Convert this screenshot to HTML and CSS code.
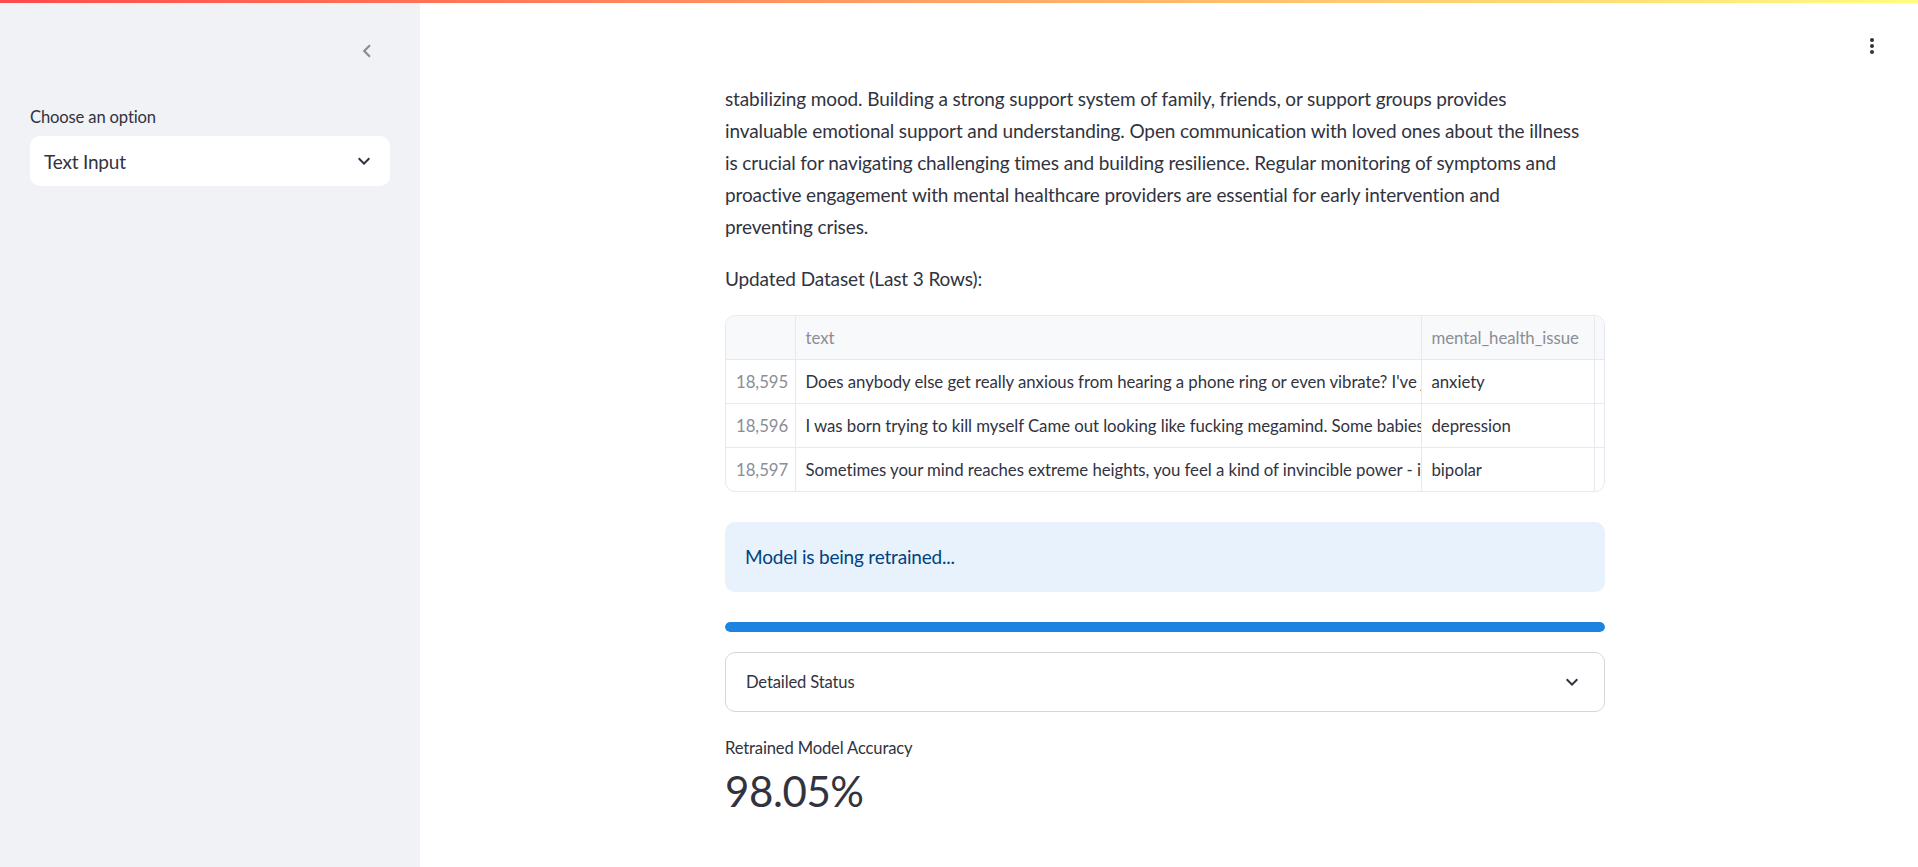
FILE: index.html
```html
<!DOCTYPE html>
<html lang="en">
<head>
<meta charset="utf-8">
<title>Mental Health App</title>
<link rel="stylesheet" href="styles.css">
</head>
<body>
<div class="decoration"></div>
<div class="app">
  <aside class="sidebar">
    <div class="sidebar-head">
      <button class="collapse-btn" aria-label="Collapse sidebar">
        <svg viewBox="0 0 24 24" width="26" height="26"><path d="M15.41 7.41L14 6l-6 6 6 6 1.41-1.41L10.83 12z" fill="currentColor"/></svg>
      </button>
    </div>
    <label class="widget-label">Choose an option</label>
    <div class="select">
      <span class="select-value">Text Input</span>
      <svg viewBox="0 0 24 24" width="24" height="24"><path d="M16.59 8.59L12 13.17 7.41 8.59 6 10l6 6 6-6z" fill="currentColor"/></svg>
    </div>
  </aside>

  <main class="main">
    <header class="topbar">
      <button class="menu-btn" aria-label="Main menu">
        <svg viewBox="0 0 24 24" width="24" height="24"><circle cx="12" cy="6" r="2" fill="currentColor"/><circle cx="12" cy="12" r="2" fill="currentColor"/><circle cx="12" cy="18" r="2" fill="currentColor"/></svg>
      </button>
    </header>

    <div class="block">
      <p class="para">Lifestyle changes, such as a regular sleep routine, healthy diet, and exercise like yoga, play a key role in<br>stabilizing mood. Building a strong support system of family, friends, or support groups provides<br>invaluable emotional support and understanding. Open communication with loved ones about the illness<br>is crucial for navigating challenging times and building resilience. Regular monitoring of symptoms and<br>proactive engagement with mental healthcare providers are essential for early intervention and<br>preventing crises.</p>

      <p class="para">Updated Dataset (Last 3 Rows):</p>

      <div class="frame">
        <table class="grid">
          <colgroup>
            <col class="c-idx"><col class="c-text"><col class="c-issue"><col class="c-fill">
          </colgroup>
          <thead>
            <tr><th></th><th>text</th><th>mental_health_issue</th><th></th></tr>
          </thead>
          <tbody>
            <tr><td class="idx">18,595</td><td>Does anybody else get really anxious from hearing a phone ring or even vibrate? I've just noticed it lately</td><td>anxiety</td><td></td></tr>
            <tr><td class="idx">18,596</td><td>I was born trying to kill myself Came out looking like fucking megamind. Some babies</td><td>depression</td><td></td></tr>
            <tr><td class="idx">18,597</td><td>Sometimes your mind reaches extreme heights, you feel a kind of invincible power - it is</td><td>bipolar</td><td></td></tr>
          </tbody>
        </table>
      </div>

      <div class="info">Model is being retrained...</div>

      <div class="progress"><div class="progress-fill" style="width:100%"></div></div>

      <div class="expander">
        <span>Detailed Status</span>
        <svg viewBox="0 0 24 24" width="24" height="24"><path d="M16.59 8.59L12 13.17 7.41 8.59 6 10l6 6 6-6z" fill="currentColor"/></svg>
      </div>

      <div class="metric">
        <div class="metric-label">Retrained Model Accuracy</div>
        <div class="metric-value">98.05%</div>
      </div>
    </div>
  </main>
</div>
</body>
</html>
```

FILE: styles.css
```css
* { box-sizing: border-box; }

html, body {
  margin: 0;
  height: 100%;
  overflow: hidden;
}

body {
  font-family: Lato, "Liberation Sans", sans-serif;
  color: #31333f;
  background: #ffffff;
}

.decoration {
  position: fixed;
  top: 0;
  left: 0;
  right: 0;
  height: 3px;
  background: linear-gradient(90deg, #ff4b4b, #fffd80);
  z-index: 10;
}

.app {
  display: flex;
  height: 100vh;
}

/* Sidebar */
.sidebar {
  width: 420px;
  flex: none;
  background: #f0f2f6;
  padding: 0 30px;
}

.sidebar-head {
  height: 102px;
  display: flex;
  justify-content: flex-end;
  align-items: flex-start;
  padding-top: 38px;
  padding-right: 10px;
}

.collapse-btn,
.menu-btn {
  border: none;
  background: none;
  padding: 0;
  display: flex;
  cursor: pointer;
}

.collapse-btn { color: #8a8c95; }

.widget-label {
  display: block;
  font-size: 16.6px;
  letter-spacing: -0.15px;
  line-height: 30px;
  margin-bottom: 4px;
}

.select {
  height: 50px;
  background: #ffffff;
  border-radius: 10px;
  display: flex;
  align-items: center;
  justify-content: space-between;
  padding: 0 14px;
  font-size: 19px;
  letter-spacing: -0.2px;
}

/* Main */
.main {
  flex: 1;
  position: relative;
  overflow: hidden;
  display: flex;
  justify-content: center;
  padding-right: 8px;
}

.topbar {
  position: absolute;
  top: 0;
  left: 0;
  right: 0;
  height: 77px;
  background: #ffffff;
  display: flex;
  justify-content: flex-end;
  align-items: flex-start;
  padding: 34px 34px 0 0;
  z-index: 5;
}

.menu-btn { color: #31333f; }

.block {
  width: 880px;
  padding-top: 51px;
  display: flex;
  flex-direction: column;
}

.para {
  margin: 0 0 20px;
  font-size: 19px;
  letter-spacing: -0.12px;
  line-height: 32px;
  white-space: nowrap;
}

/* Dataframe */
.frame {
  border: 1px solid #e6e9ef;
  border-radius: 10px;
  overflow: hidden;
  margin-bottom: 30px;
}

.grid {
  width: 100%;
  border-collapse: collapse;
  table-layout: fixed;
  font-size: 16.8px;
  letter-spacing: -0.05px;
}

.c-idx { width: 69px; }
.c-issue { width: 173px; }
.c-fill { width: 10px; }

.grid th,
.grid td {
  height: 44px;
  padding: 0 10px;
  border-right: 1px solid #e6e9ef;
  border-bottom: 1px solid #e6e9ef;
  white-space: nowrap;
  overflow: hidden;
  text-overflow: clip;
  text-align: left;
  font-weight: normal;
}

.grid th:last-child,
.grid td:last-child {
  border-right: none;
  padding: 0;
}

.grid tbody tr:last-child td { border-bottom: none; }

.grid thead th {
  background: #f8f9fb;
  color: #8b8d95;
  height: 43px;
}

.grid td.idx {
  text-align: right;
  color: #8b8d95;
}

/* Info alert */
.info {
  background: #e8f2fc;
  color: #004280;
  border-radius: 10px;
  padding: 19px 20px;
  font-size: 19px;
  letter-spacing: -0.2px;
  line-height: 32px;
  margin-bottom: 30px;
}

/* Progress */
.progress {
  height: 10px;
  border-radius: 10px;
  background: #d5e7f9;
  overflow: hidden;
  margin-bottom: 20px;
}

.progress-fill {
  height: 100%;
  background: #1c83e1;
  border-radius: 10px;
}

/* Expander */
.expander {
  height: 60px;
  border: 1px solid #d6d6d9;
  border-radius: 10px;
  display: flex;
  align-items: center;
  justify-content: space-between;
  padding: 0 20px;
  font-size: 16.6px;
  letter-spacing: -0.15px;
  margin-bottom: 20px;
}

.expander svg { color: #31333f; }

/* Metric */
.metric-label {
  font-size: 16.6px;
  letter-spacing: -0.15px;
  line-height: 32px;
}

.metric-value {
  font-size: 42px;
  letter-spacing: -0.4px;
  line-height: 54px;
}
```
